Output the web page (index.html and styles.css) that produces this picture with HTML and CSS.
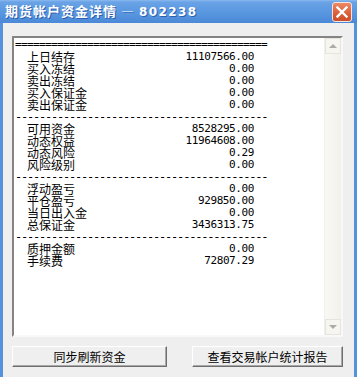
FILE: index.html
```html
<!DOCTYPE html>
<html lang="zh-CN">
<head>
    <meta charset="UTF-8">
    <meta name="viewport" content="width=device-width, initial-scale=1.0">
    <title>期货帐户资金详情</title>
    <link rel="stylesheet" href="styles.css">
</head>
<body>
<div class="window">
    <div class="titlebar">
        <span class="title">期货帐户资金详情 — <span class="acct">802238</span></span>
        <button class="close-btn" title="关闭">
            <svg width="12" height="12" viewBox="0 0 12 12"><path d="M1.5 1.5 L10.5 10.5 M10.5 1.5 L1.5 10.5" stroke="#fff" stroke-width="2.4" stroke-linecap="square"/></svg>
        </button>
    </div>
    <div class="client">
        <div class="report">
            <div class="report-body">
                <div class="sep sep-eq">==========================================</div>
                <div class="row"><span class="label">上日结存</span><span class="value">11107566.00</span></div>
                <div class="row"><span class="label">买入冻结</span><span class="value">0.00</span></div>
                <div class="row"><span class="label">卖出冻结</span><span class="value">0.00</span></div>
                <div class="row"><span class="label">买入保证金</span><span class="value">0.00</span></div>
                <div class="row"><span class="label">卖出保证金</span><span class="value">0.00</span></div>
                <div class="sep">------------------------------------------</div>
                <div class="row"><span class="label">可用资金</span><span class="value">8528295.00</span></div>
                <div class="row"><span class="label">动态权益</span><span class="value">11964608.00</span></div>
                <div class="row"><span class="label">动态风险</span><span class="value">0.29</span></div>
                <div class="row"><span class="label">风险级别</span><span class="value">0.00</span></div>
                <div class="sep">------------------------------------------</div>
                <div class="row"><span class="label">浮动盈亏</span><span class="value">0.00</span></div>
                <div class="row"><span class="label">平仓盈亏</span><span class="value">929850.00</span></div>
                <div class="row"><span class="label">当日出入金</span><span class="value">0.00</span></div>
                <div class="row"><span class="label">总保证金</span><span class="value">3436313.75</span></div>
                <div class="sep">------------------------------------------</div>
                <div class="row"><span class="label">质押金额</span><span class="value">0.00</span></div>
                <div class="row"><span class="label">手续费</span><span class="value">72807.29</span></div>
            </div>
            <div class="scrollbar">
                <div class="sb-btn"><span class="arrow up"></span></div>
                <div class="sb-track"></div>
                <div class="sb-btn"><span class="arrow down"></span></div>
            </div>
        </div>
        <div class="actions">
            <button class="btn btn-sync">同步刷新资金</button>
            <button class="btn btn-report">查看交易帐户统计报告</button>
        </div>
    </div>
</div>
</body>
</html>
```

FILE: styles.css
```css
html, body {
    margin: 0;
    padding: 0;
}
body {
    font-family: 'Noto Sans CJK SC', sans-serif;
    background: #efefef;
}
.window {
    height: 100vh;
    display: flex;
    flex-direction: column;
    border-left: 3px solid #5592dd;
    border-right: 3px solid #5592dd;
    box-sizing: border-box;
    background: #efefef;
}
.titlebar {
    height: 23px;
    margin: 0 -3px;
    display: flex;
    align-items: center;
    justify-content: space-between;
    padding: 0 5px 0 5px;
    background: linear-gradient(#8bb9ee 0, #6aa3e6 2px, #5a98e0 50%, #4b89d8 100%);
}
.title {
    color: #fff;
    font-size: 13px;
    font-weight: bold;
    letter-spacing: 1px;
    line-height: 23px;
    white-space: pre;
    text-shadow: 1px 1px 0 #2c5fae;
}
.acct {
    font-family: 'DejaVu Sans', sans-serif;
    font-size: 12px;
    letter-spacing: 1.4px;
}
.close-btn {
    width: 20px;
    height: 20px;
    padding: 0;
    margin-top: 1px;
    border: 1px solid #f4e4de;
    border-radius: 3px;
    background: linear-gradient(#ec8a69, #da5d37 60%, #cc4e2a);
    display: flex;
    align-items: center;
    justify-content: center;
}
.client {
    flex: 1;
    display: flex;
    flex-direction: column;
    padding: 13px 11px 0 9px;
}
.report {
    height: 301px;
    box-sizing: border-box;
    display: flex;
    background: #fff;
    border: 2px solid;
    border-color: #848484 #f8f8f8 #f8f8f8 #848484;
}
.report-body {
    flex: 1;
    padding: 1px 0 0 1px;
    overflow: hidden;
}
.sep {
    height: 12px;
    white-space: nowrap;
    font-family: 'DejaVu Sans Mono', monospace;
    font-size: 12px;
    letter-spacing: -1.22px;
    line-height: 12px;
    color: #000;
}
.sep-eq {
    font-size: 11px;
    letter-spacing: -0.62px;
}
.row {
    display: flex;
    width: 239px;
    box-sizing: border-box;
    padding-left: 12px;
    height: 12px;
    line-height: 12px;
    font-size: 12px;
    color: #000;
}
.label {
    white-space: nowrap;
}
.value {
    margin-left: auto;
    font-family: 'DejaVu Sans Mono', monospace;
    font-size: 11px;
    letter-spacing: -0.4px;
}
.scrollbar {
    width: 16px;
    display: flex;
    flex-direction: column;
    background: #f5f4ef;
    border-left: 1px solid #f0efe8;
}
.sb-btn {
    height: 16px;
    box-sizing: border-box;
    border: 1px solid #e6e4dc;
    background: #f6f5f0;
    display: flex;
    align-items: center;
    justify-content: center;
}
.sb-track {
    flex: 1;
    background: linear-gradient(90deg, #f9f8f4, #f2f1eb);
}
.arrow {
    width: 0;
    height: 0;
    border-left: 4px solid transparent;
    border-right: 4px solid transparent;
}
.arrow.up {
    border-bottom: 4px solid #acaba6;
}
.arrow.down {
    border-top: 4px solid #acaba6;
}
.actions {
    display: flex;
    justify-content: space-between;
    margin-top: 9px;
}
.btn {
    height: 21px;
    padding: 0;
    font-family: 'Noto Sans CJK SC', sans-serif;
    font-size: 12px;
    color: #000;
    background: #efefef;
    border: 1px solid;
    border-color: #ffffff #6e6e6e #6e6e6e #ffffff;
    box-shadow: inset -1px -1px 0 #a8a8a8;
}
.btn-sync {
    width: 155px;
}
.btn-report {
    width: 151px;
}
```
